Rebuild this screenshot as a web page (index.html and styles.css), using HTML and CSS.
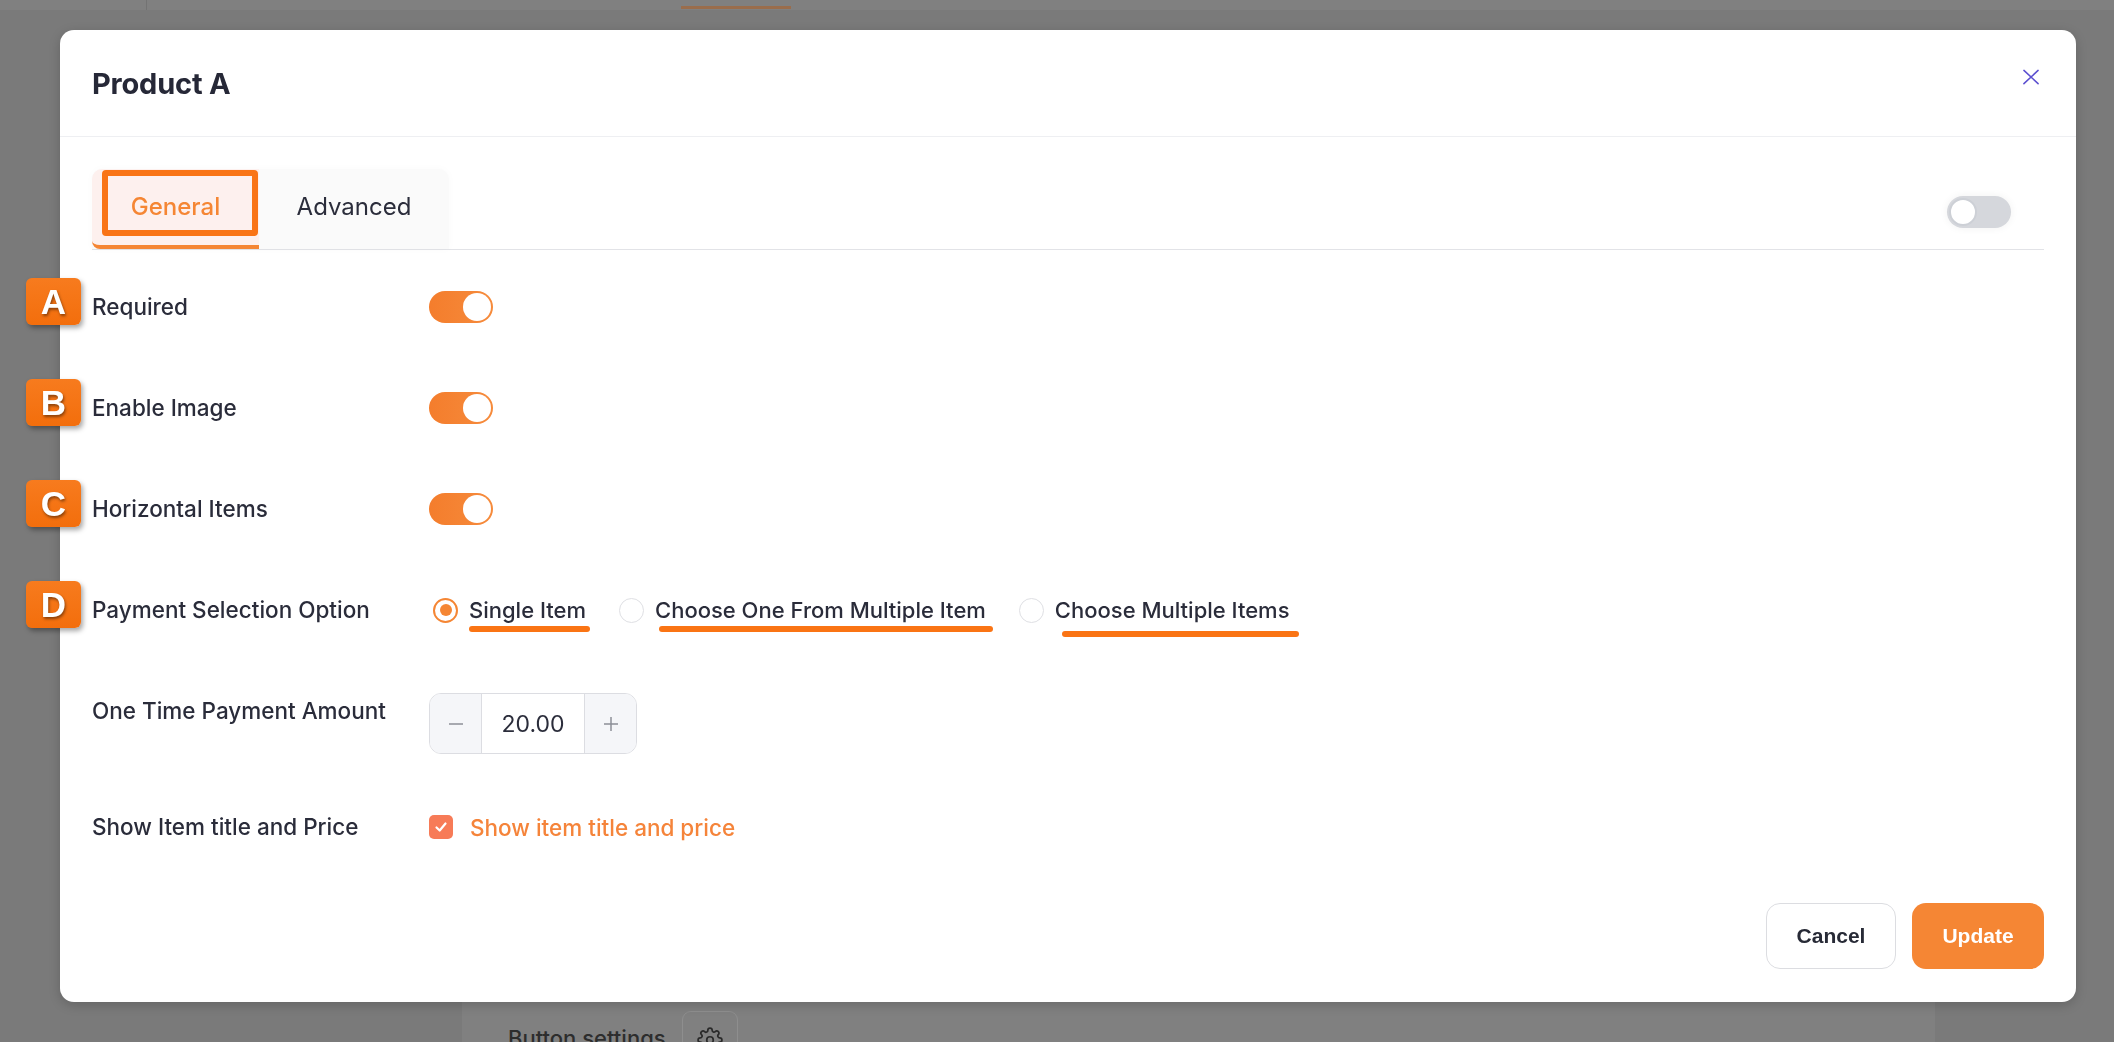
FILE: index.html
```html
<!DOCTYPE html>
<html lang="en">
<head>
<meta charset="utf-8">
<title>Product A</title>
<link rel="stylesheet" href="styles.css">
</head>
<body>
<div class="page">
  <div class="topbar"><span class="topbar-sep"></span><span class="topbar-tab"></span></div>
  <div class="page-main">
    <div class="bg-card">
      <div class="bg-card-row">
        <span class="bg-card-label">Button settings</span>
        <span class="gear-btn">
          <svg viewBox="0 0 24 24" width="26" height="26" fill="none" stroke="#2a2a2a" stroke-width="1.6" stroke-linecap="round" stroke-linejoin="round"><circle cx="12" cy="12" r="3"/><path d="M19.4 15a1.65 1.65 0 0 0 .33 1.82l.06.06a2 2 0 1 1-2.830 2.83l-.06-.06a1.650 1.65 0 0 0-1.82-.33 1.65 1.65 0 0 0-1 1.51V21a2 2 0 1 1-4 0v-.09A1.65 1.65 0 0 0 9 19.4a1.65 1.65 0 0 0-1.82.33l-.06.06a2 2 0 1 1-2.83-2.83l.06-.06A1.65 1.65 0 0 0 4.68 15a1.65 1.65 0 0 0-1.51-1H3a2 2 0 1 1 0-4h.09A1.65 1.65 0 0 0 4.6 9a1.65 1.65 0 0 0-.33-1.82l-.06-.06a2 2 0 1 1 2.83-2.83l.06.06A1.65 1.65 0 0 0 9 4.68a1.65 1.65 0 0 0 1-1.51V3a2 2 0 1 1 4 0v.09a1.650 1.65 0 0 0 1 1.51 1.65 1.65 0 0 0 1.82-.33l.06-.06a2 2 0 1 1 2.830 2.83l-.06.06A1.65 1.65 0 0 0 19.4 9a1.65 1.65 0 0 0 1.51 1H21a2 2 0 1 1 0 4h-.09a1.65 1.65 0 0 0-1.51 1z"/></svg>
        </span>
      </div>
    </div>
  </div>
</div>

<div class="overlay">
  <div class="modal">
    <header class="modal-header">
      <h2 class="modal-title">Product A</h2>
      <button class="modal-close" aria-label="Close">
        <svg viewBox="0 0 18 18" width="18" height="17"><path d="M1.5 1.5L16.5 15.5M16.5 1.5L1.5 15.5" stroke="#5b4fd0" stroke-width="1.6" fill="none" stroke-linecap="round"/></svg>
      </button>
    </header>

    <div class="modal-body">
      <div class="tabs-row">
        <div class="tabs">
          <div class="tab tab-active">General<span class="tab-mark"></span></div>
          <div class="tab tab-advanced">Advanced</div>
        </div>
        <span class="toggle toggle-off"><span class="knob"></span></span>
      </div>

      <div class="fields">
        <div class="field">
          <span class="badge">A</span>
          <div class="field-label">Required</div>
          <span class="toggle toggle-on"><span class="knob"></span></span>
        </div>
        <div class="field">
          <span class="badge">B</span>
          <div class="field-label">Enable Image</div>
          <span class="toggle toggle-on"><span class="knob"></span></span>
        </div>
        <div class="field">
          <span class="badge">C</span>
          <div class="field-label">Horizontal Items</div>
          <span class="toggle toggle-on"><span class="knob"></span></span>
        </div>
        <div class="field">
          <span class="badge">D</span>
          <div class="field-label">Payment Selection Option</div>
          <div class="radio-group">
            <label class="radio-option">
              <span class="radio radio-checked"></span>
              <span class="radio-text">Single Item<span class="mark mark-1"></span></span>
            </label>
            <label class="radio-option">
              <span class="radio"></span>
              <span class="radio-text">Choose One From Multiple Item<span class="mark mark-2"></span></span>
            </label>
            <label class="radio-option">
              <span class="radio"></span>
              <span class="radio-text">Choose Multiple Items<span class="mark mark-3"></span></span>
            </label>
          </div>
        </div>
        <div class="field field-amount">
          <div class="field-label">One Time Payment Amount</div>
          <div class="stepper">
            <span class="step-btn step-minus"><svg viewBox="0 0 18 18" width="18" height="18"><path d="M2 9H16" stroke="#8c8f97" stroke-width="1.5"/></svg></span>
            <span class="step-value">20.00</span>
            <span class="step-btn step-plus"><svg viewBox="0 0 18 18" width="18" height="18"><path d="M2 9H16M9 2V16" stroke="#8c8f97" stroke-width="1.5"/></svg></span>
          </div>
        </div>
        <div class="field field-last">
          <div class="field-label">Show Item title and Price</div>
          <label class="check">
            <span class="checkbox"><svg viewBox="0 0 16 16" width="16" height="16"><path d="M3.5 8.5L6.7 11.5L12.5 4.5" stroke="#fff" stroke-width="2.2" fill="none" stroke-linecap="round" stroke-linejoin="round"/></svg></span>
            <span class="check-text">Show item title and price</span>
          </label>
        </div>
      </div>
    </div>

    <footer class="modal-footer">
      <button class="btn btn-cancel">Cancel</button>
      <button class="btn btn-primary">Update</button>
    </footer>
  </div>
</div>
</body>
</html>
```

FILE: styles.css
```css
* { box-sizing: border-box; }

html, body {
  margin: 0;
  height: 100%;
}

body {
  background: #7a7a7a;
  font-family: "Inter", "Noto Sans", sans-serif;
  color: #2b2d3b;
  overflow: hidden;
}

/* background page */
.page {
  height: 1042px;
  display: flex;
  flex-direction: column;
}

.topbar {
  height: 10px;
  background: #808080;
  display: flex;
  flex: none;
}

.topbar-sep {
  margin-left: 146px;
  width: 1px;
  background: #737373;
}

.topbar-tab {
  margin-left: 534px;
  margin-top: 6px;
  width: 110px;
  height: 3px;
  background: #9a6d4c;
}

.page-main {
  flex: 1;
  display: flex;
  padding-left: 462px;
  padding-top: 480px;
}

.bg-card {
  width: 1473px;
  background: #808080;
  padding: 521px 0 0 46px;
}

.bg-card-row {
  display: flex;
  align-items: flex-start;
  gap: 16px;
}

.bg-card-label {
  margin-top: 14px;
  font-size: 22px;
  font-weight: 500;
  color: #2d2d2d;
}

.gear-btn {
  width: 56px;
  height: 56px;
  border: 1px solid #8e8e8e;
  border-radius: 9px;
  display: flex;
  justify-content: center;
  padding-top: 15px;
}

/* modal */
.overlay {
  position: fixed;
  inset: 0;
  display: flex;
  align-items: flex-start;
  padding: 30px 0 0 60px;
}

.modal {
  width: 2016px;
  height: 972px;
  background: #fff;
  border-radius: 14px;
  box-shadow: 0 3px 12px rgba(0, 0, 0, 0.18);
  display: flex;
  flex-direction: column;
}

.modal-header {
  height: 107px;
  padding: 0 36px 0 32px;
  border-bottom: 1px solid #eeeff2;
  display: flex;
  align-items: center;
  justify-content: space-between;
  flex: none;
}

.modal-title {
  margin: 0;
  font-size: 29px;
  font-weight: 700;
  color: #262837;
  letter-spacing: -0.2px;
}

.modal-close {
  border: none;
  background: none;
  padding: 0;
  margin-bottom: 12px;
  display: flex;
  cursor: pointer;
}

.modal-body {
  flex: 1;
  padding: 32px 32px 0;
}

/* tabs */
.tabs-row {
  height: 81px;
  display: flex;
  align-items: center;
  justify-content: space-between;
  border-bottom: 1px solid #e2e3e7;
}

.tabs {
  align-self: stretch;
  display: flex;
  background: #fafafa;
  border-radius: 10px 10px 0 0;
  box-shadow: 0 0 8px rgba(0, 0, 0, 0.025);
}

.tab {
  display: flex;
  align-items: center;
  justify-content: center;
  font-size: 24px;
  font-weight: 500;
  padding-bottom: 2px;
}

.tab-active {
  position: relative;
  width: 167px;
  background: #fdf0ee;
  color: #f58634;
  border-bottom: 4px solid #f58634;
  border-radius: 10px 0 0 8px;
}

.tab-mark {
  position: absolute;
  left: 10px;
  top: 1px;
  width: 156px;
  height: 66px;
  border: 6px solid #f97416;
  border-radius: 4px;
}

.tab-advanced {
  width: 190px;
  color: #2b2d3b;
  font-weight: 400;
  padding-bottom: 6px;
}

/* toggles */
.toggle {
  width: 64px;
  height: 32px;
  border-radius: 16px;
  padding: 2px;
  display: flex;
  align-items: center;
  flex: none;
}

.knob {
  width: 28px;
  height: 28px;
  border-radius: 50%;
  background: #fff;
}

.toggle-on {
  background: linear-gradient(90deg, #f47d2c, #f68b3c);
  justify-content: flex-end;
}

.toggle-off {
  margin-right: 33px;
  margin-top: 6px;
  background: #d5d7dc;
  box-shadow: 0 0 8px rgba(0, 0, 0, 0.06);
}

.toggle-off .knob {
  border: 2px solid #cdd0d6;
}

/* fields */
.fields {
  display: flex;
  flex-direction: column;
  padding-top: 41px;
}

.field {
  position: relative;
  display: flex;
  align-items: flex-start;
  margin-bottom: 69px;
}

.field-amount {
  margin-bottom: 57px;
}

.field-last {
  margin-bottom: 0;
}

.field-label {
  width: 337px;
  flex: none;
  font-size: 22.5px;
  line-height: 32px;
  font-weight: 500;
  color: #2a2c3a;
}

.badge {
  position: absolute;
  left: -66px;
  top: -13px;
  width: 55px;
  height: 47px;
  border-radius: 6px;
  background: linear-gradient(180deg, #f77b1e, #f36e0c);
  color: #fff;
  font-family: "Liberation Sans", Arial, sans-serif;
  font-weight: 700;
  font-size: 35px;
  display: flex;
  align-items: center;
  justify-content: center;
  box-shadow: 2px 3px 5px rgba(0, 0, 0, 0.35);
  text-shadow: 1px 2px 3px rgba(0, 0, 0, 0.45);
}

/* radios */
.radio-group {
  display: flex;
  align-items: center;
  height: 32px;
  margin-left: 4px;
}

.radio-option {
  display: flex;
  align-items: center;
  gap: 11px;
  margin-right: 33px;
  font-size: 22px;
  font-weight: 500;
  line-height: 32px;
  color: #2a2c3a;
}

.radio {
  width: 25px;
  height: 25px;
  border-radius: 50%;
  border: 1px solid #dfe0e4;
  background: #fff;
  display: flex;
  align-items: center;
  justify-content: center;
}

.radio-checked {
  border: 2px solid #f58634;
}

.radio-checked::after {
  content: "";
  width: 12px;
  height: 12px;
  border-radius: 50%;
  background: #f58634;
}

.radio-text {
  position: relative;
}

.mark {
  position: absolute;
  height: 6px;
  top: 32px;
  border-radius: 3px;
  background: #fa7414;
}

.mark-1 { left: 0; right: -4px; }
.mark-2 { left: 4px; right: -7px; }
.mark-3 { left: 7px; right: -10px; top: 37px; }

/* stepper */
.stepper {
  display: flex;
  height: 61px;
  margin-top: -2px;
  border: 1px solid #dcdde2;
  border-radius: 12px;
  overflow: hidden;
}

.step-btn {
  width: 52px;
  background: #f5f6f9;
  display: flex;
  align-items: center;
  justify-content: center;
}

.step-minus { border-right: 1px solid #dcdde2; }
.step-plus { border-left: 1px solid #dcdde2; }

.step-value {
  width: 102px;
  display: flex;
  align-items: center;
  justify-content: center;
  font-size: 23px;
  color: #2b2d3b;
}

/* checkbox */
.check {
  display: flex;
  align-items: center;
  gap: 17px;
  height: 32px;
}

.checkbox {
  width: 24px;
  height: 24px;
  border-radius: 5px;
  background: #f77b57;
  display: flex;
  align-items: center;
  justify-content: center;
}

.check-text {
  font-size: 22.5px;
  font-weight: 500;
  color: #f5843a;
}

/* footer */
.modal-footer {
  display: flex;
  justify-content: flex-end;
  gap: 16px;
  padding: 0 32px 33px;
}

.btn {
  height: 66px;
  border-radius: 14px;
  font-family: "Liberation Sans", Arial, sans-serif;
  font-weight: 700;
  font-size: 21px;
  cursor: pointer;
}

.btn-cancel {
  width: 130px;
  background: #fff;
  border: 1px solid #dcdde1;
  color: #272a36;
}

.btn-primary {
  width: 132px;
  background: #f58634;
  border: none;
  color: #fff;
}
```
